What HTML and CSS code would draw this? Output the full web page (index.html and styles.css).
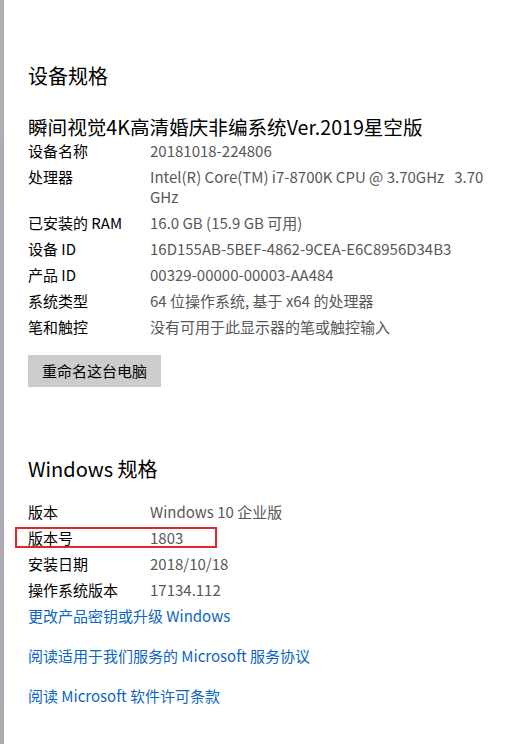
FILE: index.html
```html
<!DOCTYPE html>
<html lang="zh-CN">
<head>
<meta charset="utf-8">
<title>关于</title>
<link rel="stylesheet" href="styles.css">
</head>
<body>
<div class="page">
  <div class="edge"></div>
  <main class="content">
    <section class="device">
      <h2 class="heading">设备规格</h2>
      <div class="product">瞬间视觉4K高清婚庆非编系统Ver.2019星空版</div>
      <dl class="specs">
        <div class="row"><dt>设备名称</dt><dd>20181018-224806</dd></div>
        <div class="row"><dt>处理器</dt><dd>Intel(R) Core(TM) i7-8700K CPU @ 3.70GHz&nbsp;&nbsp; 3.70 GHz</dd></div>
        <div class="row"><dt>已安装的 RAM</dt><dd>16.0 GB (15.9 GB 可用)</dd></div>
        <div class="row"><dt>设备 ID</dt><dd>16D155AB-5BEF-4862-9CEA-E6C8956D34B3</dd></div>
        <div class="row"><dt>产品 ID</dt><dd>00329-00000-00003-AA484</dd></div>
        <div class="row"><dt>系统类型</dt><dd>64 位操作系统, 基于 x64 的处理器</dd></div>
        <div class="row"><dt>笔和触控</dt><dd>没有可用于此显示器的笔或触控输入</dd></div>
      </dl>
      <button class="rename" type="button">重命名这台电脑</button>
    </section>
    <section class="windows">
      <h2 class="heading">Windows 规格</h2>
      <dl class="specs">
        <div class="row"><dt>版本</dt><dd>Windows 10 企业版</dd></div>
        <div class="row highlight"><dt>版本号</dt><dd>1803</dd></div>
        <div class="row"><dt>安装日期</dt><dd>2018/10/18</dd></div>
        <div class="row"><dt>操作系统版本</dt><dd>17134.112</dd></div>
      </dl>
      <nav class="links">
        <a class="link first" href="#">更改产品密钥或升级 Windows</a>
        <a class="link" href="#">阅读适用于我们服务的 Microsoft 服务协议</a>
        <a class="link" href="#">阅读 Microsoft 软件许可条款</a>
      </nav>
    </section>
  </main>
</div>
</body>
</html>
```
FILE: styles.css
```css
html, body {
  margin: 0;
  padding: 0;
  background: #ffffff;
}

body {
  font-family: "Noto Sans CJK SC", "Noto Sans", sans-serif;
  font-size: 15px;
  color: #000000;
}

.page {
  display: flex;
  min-height: 744px;
}

.edge {
  width: 4px;
  flex: 0 0 4px;
  background: linear-gradient(180deg, #b3acb3 0%, #aea9b8 50%, #b0a9b2 100%);
}

.content {
  flex: 1;
  padding: 62px 12px 0 24px;
}

.heading {
  margin: 0;
  font-size: 20px;
  font-weight: 400;
  line-height: 28px;
}

.product {
  margin-top: 22px;
  font-size: 19.6px;
  line-height: 29px;
}

.specs {
  margin: 0;
  display: flex;
  flex-direction: column;
  gap: 6px;
  width: 469px;
}

.row {
  display: grid;
  grid-template-columns: 122px 1fr;
  line-height: 20px;
  position: relative;
}

.row dt {
  margin: 0;
  color: #000000;
}

.row dd {
  margin: 0;
  color: #585858;
}

.highlight::after {
  content: "";
  position: absolute;
  left: -13px;
  top: -1px;
  width: 198px;
  height: 17px;
  border: 2px solid #e3262d;
}

.rename {
  margin-top: 18px;
  display: block;
  height: 32px;
  padding: 0 14px;
  border: 0;
  background: #cccccc;
  font-family: inherit;
  font-size: 15px;
  color: #000000;
  line-height: 32px;
}

.windows {
  margin-top: 68px;
}

.windows .specs {
  margin-top: 19px;
}

.links {
  display: flex;
  flex-direction: column;
  align-items: flex-start;
  margin-top: 6px;
}

.link {
  display: block;
  line-height: 20px;
  color: #0b66c0;
  text-decoration: none;
  margin-top: 20px;
}

.link.first {
  margin-top: 0;
}
```
